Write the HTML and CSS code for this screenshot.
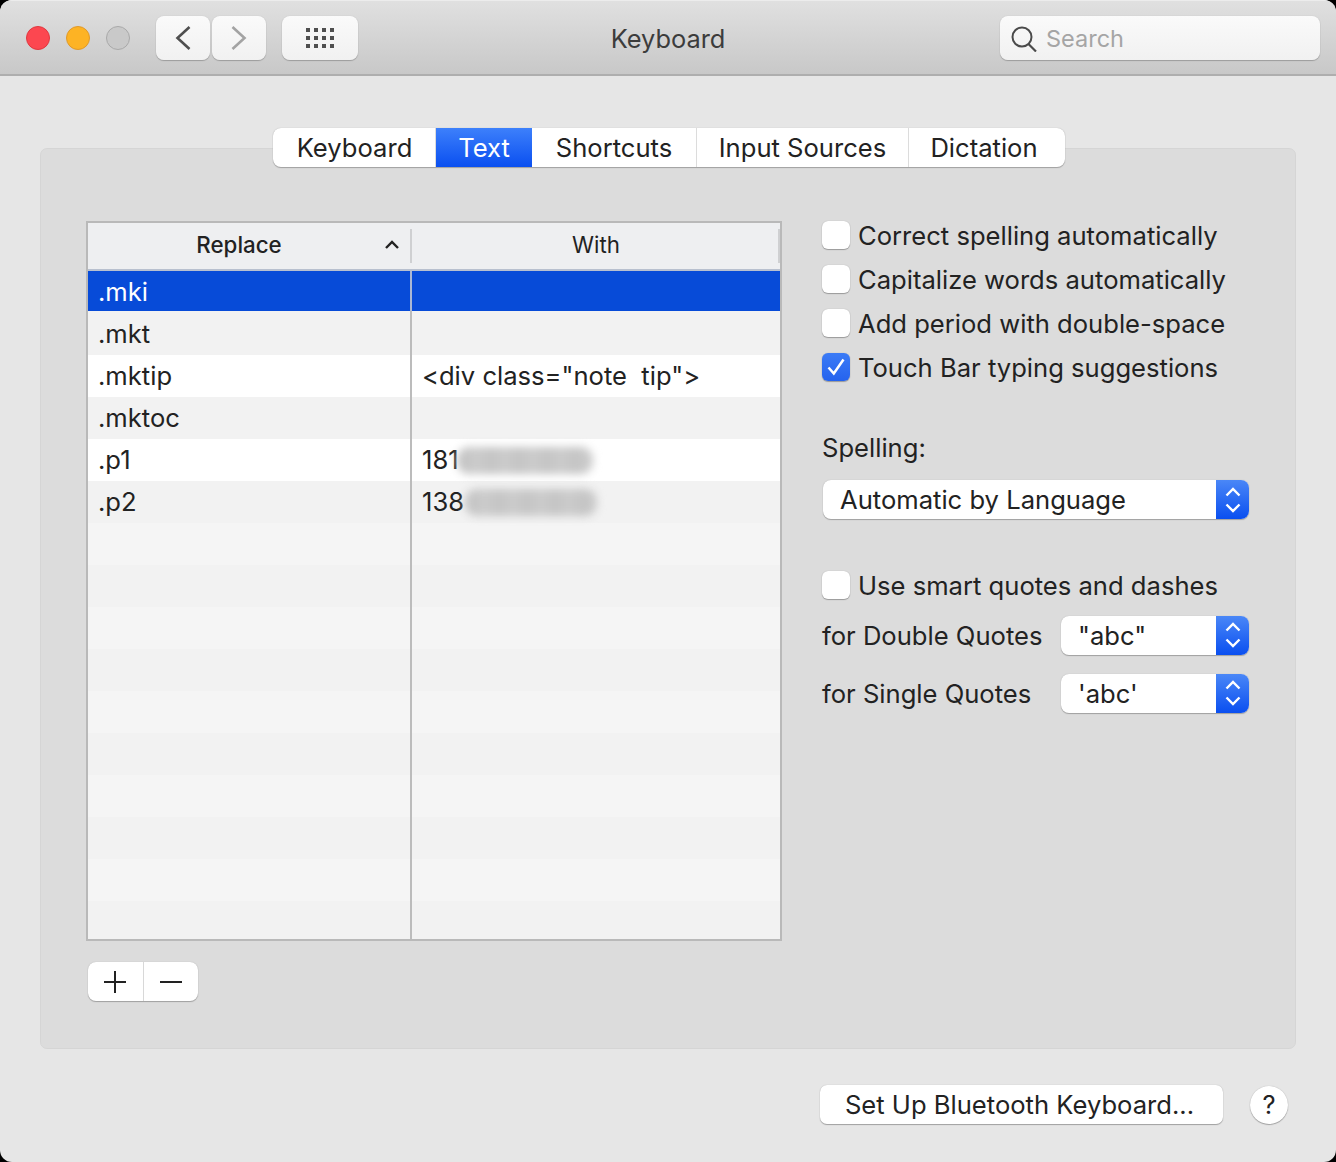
FILE: index.html
```html
<!DOCTYPE html>
<html lang="en">

<head>
    <meta charset="UTF-8">
    <title>Keyboard</title>
    <link rel="stylesheet" href="styles.css">
</head>

<body>
    <div class="window">
        <!-- Title bar -->
        <header class="titlebar">
            <div class="lights">
                <span class="light red"></span>
                <span class="light yellow"></span>
                <span class="light grey"></span>
            </div>
            <div class="nav">
                <button class="tool-btn nav-btn">
                    <svg width="16" height="24" viewBox="0 0 16 24"><path d="M14.500 1 L2.500 12 L14.500 23" fill="none" stroke="#4f4f4f" stroke-width="2.600"/></svg>
                </button>
                <button class="tool-btn nav-btn">
                    <svg width="16" height="24" viewBox="0 0 16 24"><path d="M1.500 1 L13.500 12 L1.500 23" fill="none" stroke="#a3a3a3" stroke-width="2.600"/></svg>
                </button>
            </div>
            <button class="tool-btn grid-btn">
                <svg width="28" height="20" viewBox="0 0 28 20" fill="#4f4f4f">
                    <rect x="0" y="0" width="4" height="4"/><rect x="8" y="0" width="4" height="4"/><rect x="16" y="0" width="4" height="4"/><rect x="24" y="0" width="4" height="4"/>
                    <rect x="0" y="8" width="4" height="4"/><rect x="8" y="8" width="4" height="4"/><rect x="16" y="8" width="4" height="4"/><rect x="24" y="8" width="4" height="4"/>
                    <rect x="0" y="16" width="4" height="4"/><rect x="8" y="16" width="4" height="4"/><rect x="16" y="16" width="4" height="4"/><rect x="24" y="16" width="4" height="4"/>
                </svg>
            </button>
            <div class="title">Keyboard</div>
            <div class="search">
                <svg class="search-icon" width="26" height="26" viewBox="0 0 26 26"><circle cx="11" cy="11" r="9.500" fill="none" stroke="#4a4a4a" stroke-width="2"/><path d="M17.500 18 L25 25.500" stroke="#4a4a4a" stroke-width="2.200"/></svg>
                <span>Search</span>
            </div>
        </header>

        <main class="content">
            <nav class="tabs">
                <div class="tab tab-keyboard">Keyboard</div>
                <div class="tab tab-text active">Text</div>
                <div class="tab tab-shortcuts">Shortcuts</div>
                <div class="tab tab-input">Input Sources</div>
                <div class="tab tab-dictation">Dictation</div>
            </nav>

            <section class="panel">
                <div class="left">
                    <div class="table">
                        <div class="thead">
                            <div class="th th-replace">Replace
                                <svg class="sort" width="16" height="10" viewBox="0 0 16 10"><path d="M2 9 L8 3 L14 9" fill="none" stroke="#222" stroke-width="2.400"/></svg>
                            </div>
                            <div class="th th-with">With</div>
                        </div>
                        <div class="tbody">
                            <div class="row selected"><div class="cell c1">.mki</div><div class="cell c2"></div></div>
                            <div class="row odd first"><div class="cell c1">.mkt</div><div class="cell c2"></div></div>
                            <div class="row even"><div class="cell c1">.mktip</div><div class="cell c2">&lt;div class="note&nbsp;&nbsp;tip"&gt;</div></div>
                            <div class="row odd"><div class="cell c1">.mktoc</div><div class="cell c2"></div></div>
                            <div class="row even"><div class="cell c1">.p1</div><div class="cell c2">181<span class="blur blur-a"></span></div></div>
                            <div class="row odd"><div class="cell c1">.p2</div><div class="cell c2">138<span class="blur blur-b"></span></div></div>
                            <div class="row blank-even"><div class="cell c1"></div><div class="cell c2"></div></div>
                            <div class="row blank-odd"><div class="cell c1"></div><div class="cell c2"></div></div>
                            <div class="row blank-even"><div class="cell c1"></div><div class="cell c2"></div></div>
                            <div class="row blank-odd"><div class="cell c1"></div><div class="cell c2"></div></div>
                            <div class="row blank-even"><div class="cell c1"></div><div class="cell c2"></div></div>
                            <div class="row blank-odd"><div class="cell c1"></div><div class="cell c2"></div></div>
                            <div class="row blank-even"><div class="cell c1"></div><div class="cell c2"></div></div>
                            <div class="row blank-odd"><div class="cell c1"></div><div class="cell c2"></div></div>
                            <div class="row blank-even"><div class="cell c1"></div><div class="cell c2"></div></div>
                            <div class="row blank-odd"><div class="cell c1"></div><div class="cell c2"></div></div>
                            <div class="row blank-even last"><div class="cell c1"></div><div class="cell c2"></div></div>
                        </div>
                    </div>
                    <div class="plus-minus">
                        <button class="pm-btn">
                            <svg width="24" height="24" viewBox="0 0 24 24"><path d="M1 12 H23 M12 1 V23" stroke="#222" stroke-width="2"/></svg>
                        </button>
                        <button class="pm-btn">
                            <svg width="24" height="24" viewBox="0 0 24 24"><path d="M1 12 H23" stroke="#222" stroke-width="2"/></svg>
                        </button>
                    </div>
                </div>

                <div class="right">
                    <div class="checks">
                        <label class="check"><span class="box"></span>Correct spelling automatically</label>
                        <label class="check"><span class="box"></span>Capitalize words automatically</label>
                        <label class="check"><span class="box"></span>Add period with double-space</label>
                        <label class="check"><span class="box on">
                            <svg width="18" height="18" viewBox="0 0 18 18"><path d="M1.500 9.500 L6.800 15.500 L16.500 1.500" fill="none" stroke="#fff" stroke-width="2.500"/></svg>
                        </span>Touch Bar typing suggestions</label>
                    </div>

                    <div class="spelling-label">Spelling:</div>
                    <div class="select select-wide">
                        <span class="select-text">Automatic by Language</span>
                        <span class="stepper">
                            <svg width="18" height="30" viewBox="0 0 18 30"><path d="M2.500 10.500 L9 4 L15.500 10.500 M2.500 19.500 L9 26 L15.500 19.500" fill="none" stroke="#fff" stroke-width="2.400"/></svg>
                        </span>
                    </div>

                    <label class="check smart"><span class="box"></span>Use smart quotes and dashes</label>
                    <div class="quote-row quote-double">
                        <span>for Double Quotes</span>
                        <div class="select select-short">
                            <span class="select-text">"abc"</span>
                            <span class="stepper">
                                <svg width="18" height="30" viewBox="0 0 18 30"><path d="M2.500 10.500 L9 4 L15.500 10.500 M2.500 19.500 L9 26 L15.500 19.500" fill="none" stroke="#fff" stroke-width="2.400"/></svg>
                            </span>
                        </div>
                    </div>
                    <div class="quote-row quote-single">
                        <span>for Single Quotes</span>
                        <div class="select select-short">
                            <span class="select-text">'abc'</span>
                            <span class="stepper">
                                <svg width="18" height="30" viewBox="0 0 18 30"><path d="M2.500 10.500 L9 4 L15.500 10.500 M2.500 19.500 L9 26 L15.500 19.500" fill="none" stroke="#fff" stroke-width="2.400"/></svg>
                            </span>
                        </div>
                    </div>
                </div>
            </section>

            <footer class="bottom">
                <button class="bt-btn">Set Up Bluetooth Keyboard...</button>
                <button class="help">?</button>
            </footer>
        </main>
    </div>
</body>

</html>
```

FILE: styles.css
```css
* {
    box-sizing: border-box;
}

html,
body {
    margin: 0;
    height: 100%;
    background: #000;
}

body {
    font-family: Inter, "Noto Sans", sans-serif;
    font-size: 25.600px;
    color: #222;
    overflow: hidden;
}

button {
    font: inherit;
    color: inherit;
    padding: 0;
    border: none;
    background: none;
}

.window {
    width: 1336px;
    height: 1162px;
    background: #e6e6e6;
    border-radius: 12px;
    overflow: hidden;
    display: flex;
    flex-direction: column;
}

/* Title bar */
.titlebar {
    position: relative;
    height: 76px;
    flex: none;
    display: flex;
    align-items: flex-start;
    padding: 15px 16px 0 26px;
    background: linear-gradient(#e0e0e0, #c8c8c8);
    border-top: 1px solid #ececec;
    border-bottom: 2px solid #aeaeae;
}

.lights {
    display: flex;
    gap: 16px;
    margin-top: 10px;
}

.light {
    width: 24px;
    height: 24px;
    border-radius: 50%;
    border: 1px solid transparent;
}

.red {
    background: #fc4750;
    border-color: #e0383f;
}

.yellow {
    background: #fdb324;
    border-color: #e0992a;
}

.grey {
    background: #c9c9c9;
    border-color: #a9a9a9;
}

.tool-btn {
    height: 44px;
    display: flex;
    align-items: center;
    justify-content: center;
    background: linear-gradient(#fafafa, #f1f1f1);
    border-radius: 8px;
    box-shadow: 0 1px 1px #9c9c9c, 0 0 1px #b5b5b5;
}

.nav {
    display: flex;
    gap: 2px;
    margin-left: 26px;
}

.nav-btn {
    width: 54px;
}

.grid-btn {
    width: 76px;
    margin-left: 16px;
}

.title {
    position: absolute;
    left: 0;
    right: 0;
    top: 22px;
    text-align: center;
    font-size: 25.400px;
    color: #3c3c3c;
    line-height: 32px;
}

.search {
    margin-left: auto;
    width: 320px;
    height: 44px;
    display: flex;
    align-items: center;
    gap: 9px;
    padding-left: 11px;
    font-size: 23.500px;
    color: #a5a5a5;
    background: linear-gradient(#fafafa, #f1f1f1);
    border-radius: 8px;
    box-shadow: 0 1px 1px #9c9c9c, 0 0 1px #b5b5b5;
}

.search-icon {
    margin-top: 2px;
}

/* Main area */
.content {
    position: relative;
    flex: 1;
    padding: 52px 40px 0;
}

.tabs {
    position: relative;
    z-index: 1;
    display: flex;
    width: 792px;
    height: 39px;
    margin: 0 0 -19px 233px;
    background: #fff;
    border-radius: 8px;
    box-shadow: 0 1px 1px #a0a0a0, 0 0 1px #a8a8a8;
    overflow: hidden;
}

.tab {
    display: flex;
    align-items: center;
    justify-content: center;
    border-right: 1px solid #dcdcdc;
}

.tab-keyboard {
    width: 163px;
    padding-left: 1px;
}

.tab-text {
    width: 96px;
}

.tab-shortcuts {
    width: 165px;
}

.tab-input {
    width: 212px;
}

.tab-dictation {
    flex: 1;
    border-right: none;
    padding-right: 6px;
}

.tab.active {
    color: #fff;
    border-right: none;
    background: linear-gradient(#3d80fb, #0a4ff0);
}

.panel {
    height: 901px;
    display: flex;
    padding: 70px 0 0 45px;
    background: #dcdcdc;
    border: 1px solid #d5d5d5;
    border-radius: 7px;
}

/* Table */
.left {
    width: 696px;
    flex: none;
    margin-top: 2px;
}

.table {
    height: 720px;
    border: 2px solid #b9b9b9;
    background: #f5f5f5;
    overflow: hidden;
}

.thead {
    display: flex;
    height: 48px;
    background: #eeeff1;
    border-bottom: 2px solid #b8c0cf;
    font-size: 22.300px;
    color: #222;
}

.th {
    position: relative;
    display: flex;
    align-items: center;
    justify-content: center;
    padding-bottom: 3px;
}

.th-replace {
    width: 324px;
    font-weight: 500;
    padding-right: 22px;
}

.th-with {
    flex: 1;
}

.th::after {
    content: "";
    position: absolute;
    right: 0;
    top: 6px;
    height: 34px;
    width: 2px;
    background: #cfd0d2;
}

.sort {
    position: absolute;
    right: 12px;
    top: 16px;
}

.row {
    display: flex;
    height: 42px;
}

.row.selected {
    height: 40px;
    background: #074bd8;
    color: #fff;
}

.row.first {
    height: 44px;
}

.odd {
    background: #f2f2f2;
}

.even {
    background: #fff;
}

.blank-even {
    background: #f5f5f5;
}

.blank-odd {
    background: #f2f2f2;
}

.cell {
    display: flex;
    align-items: center;
    padding: 0 0 2px 10px;
    white-space: pre;
}

.selected .cell,
.first .cell {
    padding-bottom: 0;
}

.c1 {
    width: 324px;
    border-right: 2px solid #bcbcbc;
}

.selected .c1 {
    border-right-color: #a9b7d4;
}

.c2 {
    flex: 1;
}

.row.last {
    height: 60px;
}

.blur {
    display: block;
    height: 27px;
    margin-top: 2px;
    background: repeating-linear-gradient(90deg, #c6c6c6 0, #c6c6c6 12px, #cdcdcd 20px, #c6c6c6 28px);
    border-radius: 12px;
    filter: blur(4px);
}

.blur-a {
    width: 136px;
    margin-left: -2px;
}

.blur-b {
    width: 132px;
    margin-left: 1px;
}

.plus-minus {
    display: flex;
    width: 110px;
    height: 39px;
    margin: 21px 0 0 2px;
    background: #fff;
    border-radius: 8px;
    box-shadow: 0 1px 1px #a0a0a0, 0 0 1px #a8a8a8;
    overflow: hidden;
}

.pm-btn {
    flex: 1;
    display: flex;
    align-items: center;
    justify-content: center;
}

.pm-btn + .pm-btn {
    border-left: 1px solid #d8d8d8;
}

/* Right column */
.right {
    margin-left: 40px;
    width: 428px;
}

.checks {
    display: flex;
    flex-direction: column;
    gap: 12px;
}

.check {
    display: flex;
    align-items: center;
    gap: 8px;
    height: 32px;
    white-space: nowrap;
}

.box {
    flex: none;
    width: 28px;
    height: 28px;
    display: flex;
    align-items: center;
    justify-content: center;
    background: #fff;
    border-radius: 6px;
    box-shadow: 0 1px 1px #9a9a9a, 0 0 1px #a0a0a0;
}

.box.on {
    background: linear-gradient(#3b7bf6, #2563ee);
}

.spelling-label {
    margin-top: 49px;
    line-height: 32px;
}

.select {
    display: flex;
    align-items: center;
    height: 39px;
    background: #fff;
    border-radius: 8px;
    box-shadow: 0 1px 1px #a0a0a0, 0 0 1px #a8a8a8;
    overflow: hidden;
}

.select-wide {
    width: 426px;
    margin: 16px 0 0 1px;
}

.select-short {
    width: 188px;
}

.select-text {
    flex: 1;
    padding-left: 17px;
    line-height: 39px;
}

.stepper {
    width: 33px;
    height: 100%;
    display: flex;
    align-items: center;
    justify-content: center;
    background: linear-gradient(#4a87f7, #0a4ff0);
}

.smart {
    margin-top: 50px;
}

.quote-row {
    display: flex;
    align-items: center;
    justify-content: space-between;
    width: 427px;
    height: 40px;
}

.quote-double {
    margin-top: 14px;
}

.quote-single {
    margin-top: 18px;
}

/* Bottom buttons */
.bottom {
    display: flex;
    align-items: center;
    justify-content: flex-end;
    gap: 27px;
    margin-top: 36px;
    padding-right: 8px;
}

.bt-btn {
    width: 403px;
    height: 39px;
    padding-right: 4px;
    background: #fff;
    border-radius: 7px;
    box-shadow: 0 1px 1px #a0a0a0, 0 0 1px #a8a8a8;
}

.help {
    width: 38px;
    height: 38px;
    background: #fff;
    border-radius: 50%;
    box-shadow: 0 1px 1px #a0a0a0, 0 0 1px #a8a8a8;
}
```
